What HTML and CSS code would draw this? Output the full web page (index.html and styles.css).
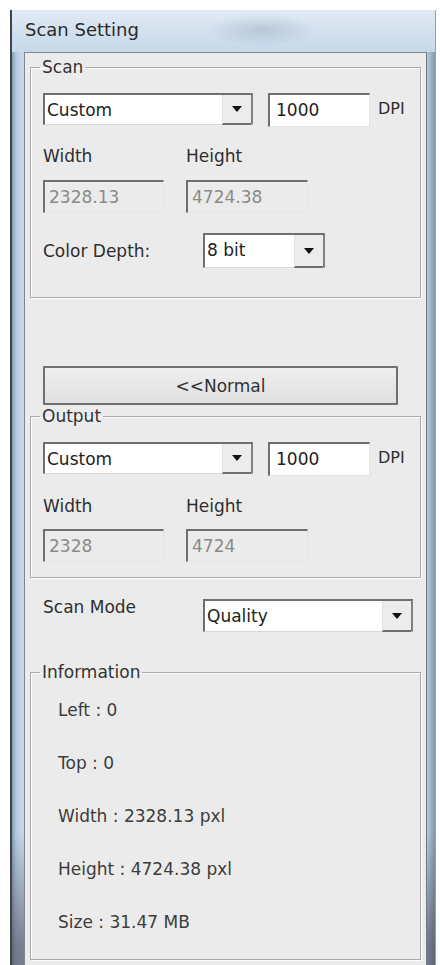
FILE: index.html
```html
<!DOCTYPE html>
<html lang="en">
<head>
    <meta charset="UTF-8">
    <meta name="viewport" content="width=device-width, initial-scale=1.0">
    <title>Scan Setting</title>
    <link rel="stylesheet" href="styles.css">
</head>
<body>
    <div class="window">
        <div class="titlebar">
            <span class="title">Scan Setting</span>
        </div>

        <div class="client">
            <!-- Scan -->
            <fieldset class="group group-scan">
                <legend>Scan</legend>
                <div class="row row-res">
                    <div class="combo combo-wide">
                        <span class="combo-text">Custom</span>
                        <span class="combo-btn"><svg width="10" height="6" viewBox="0 0 10 6"><path d="M0 0H10L5 6Z" fill="#111"/></svg></span>
                    </div>
                    <div class="edit edit-dpi">1000</div>
                    <span class="unit">DPI</span>
                </div>
                <div class="row row-labels">
                    <span class="col-label">Width</span>
                    <span class="col-label">Height</span>
                </div>
                <div class="row row-size">
                    <div class="edit disabled edit-w">2328.13</div>
                    <div class="edit disabled edit-h">4724.38</div>
                </div>
                <div class="row row-depth">
                    <span class="side-label">Color Depth:</span>
                    <div class="combo combo-small">
                        <span class="combo-text">8 bit</span>
                        <span class="combo-btn"><svg width="10" height="6" viewBox="0 0 10 6"><path d="M0 0H10L5 6Z" fill="#111"/></svg></span>
                    </div>
                </div>
            </fieldset>

            <button class="btn-normal">&lt;&lt;Normal</button>

            <!-- Output -->
            <fieldset class="group group-output">
                <legend>Output</legend>
                <div class="row row-res">
                    <div class="combo combo-wide">
                        <span class="combo-text">Custom</span>
                        <span class="combo-btn"><svg width="10" height="6" viewBox="0 0 10 6"><path d="M0 0H10L5 6Z" fill="#111"/></svg></span>
                    </div>
                    <div class="edit edit-dpi">1000</div>
                    <span class="unit">DPI</span>
                </div>
                <div class="row row-labels">
                    <span class="col-label">Width</span>
                    <span class="col-label">Height</span>
                </div>
                <div class="row row-size">
                    <div class="edit disabled edit-w">2328</div>
                    <div class="edit disabled edit-h">4724</div>
                </div>
            </fieldset>

            <div class="row row-mode">
                <span class="side-label">Scan Mode</span>
                <div class="combo combo-wide">
                    <span class="combo-text">Quality</span>
                    <span class="combo-btn"><svg width="10" height="6" viewBox="0 0 10 6"><path d="M0 0H10L5 6Z" fill="#111"/></svg></span>
                </div>
            </div>

            <!-- Information -->
            <fieldset class="group group-info">
                <legend>Information</legend>
                <div class="info-row">Left : 0</div>
                <div class="info-row">Top : 0</div>
                <div class="info-row">Width : 2328.13 pxl</div>
                <div class="info-row">Height : 4724.38 pxl</div>
                <div class="info-row">Size : 31.47 MB</div>
            </fieldset>
        </div>
    </div>
</body>
</html>
```

FILE: styles.css
```css
body {
    margin: 0;
    padding: 0;
    background-color: #ffffff;
    font-family: 'DejaVu Sans', 'Noto Sans', sans-serif;
    font-size: 17px;
    color: #2e2e2e;
    height: 100vh;
    overflow: hidden;
}

.window {
    margin: 10px 0 0 10px;
    width: 403px;
    height: 955px;
    border-left: 2px solid #3f454c;
    border-right: 1px solid #8fa3b6;
    padding: 0 8px 0 12px;
    background:
        linear-gradient(to bottom, rgba(0, 0, 0, 0) 86%, rgba(70, 70, 80, 0.6) 98%),
        linear-gradient(to right, #8a9bad 0, #b4c9dd 4px, #c3d6e8 9px, #c3d6e8 413px, #a2b8cd 418px, #8696a8 423px);
}

.titlebar {
    height: 42px;
    margin: 0 -8px 0 -12px;
    padding-left: 13px;
    display: flex;
    align-items: center;
    background:
        radial-gradient(ellipse 55px 16px at 250px 20px, rgba(120, 140, 160, 0.3), rgba(120, 140, 160, 0)),
        linear-gradient(#e0eaf4, #c6d8ea);
}

.title {
    font-size: 18px;
    color: #2b2b2b;
    line-height: 22px;
    margin-top: -2px;
}

.client {
    box-sizing: border-box;
    height: 913px;
    background-color: #ebebeb;
    border: 1px solid #7c8995;
    border-right-color: #6d7a86;
    border-bottom: 0;
    padding: 4px 5px 0 5px;
}

.group {
    margin: 0;
    padding: 0 12px 0 12px;
    border: 1px solid #a9a9a9;
    box-shadow: inset 1px 1px 0 #ffffff, 1px 1px 0 #ffffff;
    min-inline-size: 0;
}

.group legend {
    font-size: 17px;
    line-height: 20px;
    padding: 0 2px;
    margin-left: -3px;
    color: #333333;
}

.row {
    display: flex;
}

.row-res {
    margin-top: 16px;
    align-items: flex-start;
}

.combo {
    display: flex;
    box-sizing: border-box;
    height: 32px;
    background: #ffffff;
    border-top: 2px solid #6f6f6f;
    border-left: 2px solid #6f6f6f;
    border-right: 2px solid #7f7f7f;
    border-bottom: 1px solid #d8d8d8;
}

.combo-wide {
    width: 210px;
}

.combo-small {
    width: 122px;
    height: 35px;
}

.combo-text {
    flex: 1;
    padding-left: 2px;
    line-height: 30px;
    color: #222222;
}

.combo-btn {
    width: 28px;
    display: flex;
    align-items: center;
    justify-content: center;
    background: #ececec;
    border-left: 1px solid #e2e2e2;
    border-bottom: 2px solid #6f6f6f;
    margin-bottom: -1px;
}

.edit {
    box-sizing: border-box;
    height: 33px;
    background: #ffffff;
    border-top: 2px solid #6f6f6f;
    border-left: 2px solid #6f6f6f;
    border-right: 1px solid #e4e4e4;
    border-bottom: 1px solid #e4e4e4;
    padding-left: 6px;
    line-height: 31px;
    color: #222222;
}

.edit-dpi {
    width: 102px;
    height: 34px;
    margin-left: 15px;
}

.unit {
    margin-left: 8px;
    line-height: 32px;
    font-size: 16px;
}

.row-labels {
    margin-top: 19px;
    line-height: 20px;
}

.group-output .row-labels {
    margin-top: 20px;
}

.col-label {
    width: 143px;
}

.row-size {
    margin-top: 14px;
    gap: 22px;
}

.group-output .row-size {
    margin-top: 13px;
}

.edit.disabled {
    background: #ebebeb;
    color: #8a8a8a;
    padding-left: 4px;
}

.edit-w {
    width: 121px;
}

.edit-h {
    width: 122px;
}

.row-depth {
    margin-top: 20px;
    align-items: center;
    padding-bottom: 29px;
}

.side-label {
    width: 160px;
    line-height: 20px;
}

.btn-normal {
    display: block;
    margin: 68px 0 0 13px;
    width: 355px;
    height: 39px;
    font-family: inherit;
    font-size: 17px;
    color: #333333;
    background: linear-gradient(#efefef, #e0e0e0);
    border: 2px solid #707070;
    border-radius: 1px;
    padding: 0;
}

.group-output {
    margin-top: 1px;
    padding-bottom: 15px;
}

.row-mode {
    margin-top: 19px;
    padding-left: 13px;
    align-items: flex-start;
}

.row-mode .combo {
    margin-top: 2px;
    height: 33px;
}

.group-info {
    margin-top: 30px;
    padding-bottom: 27px;
}

.info-row {
    padding-left: 15px;
    line-height: 20px;
    margin-top: 33px;
    color: #3c3c3c;
}

.info-row:first-of-type {
    margin-top: 18px;
}
```
